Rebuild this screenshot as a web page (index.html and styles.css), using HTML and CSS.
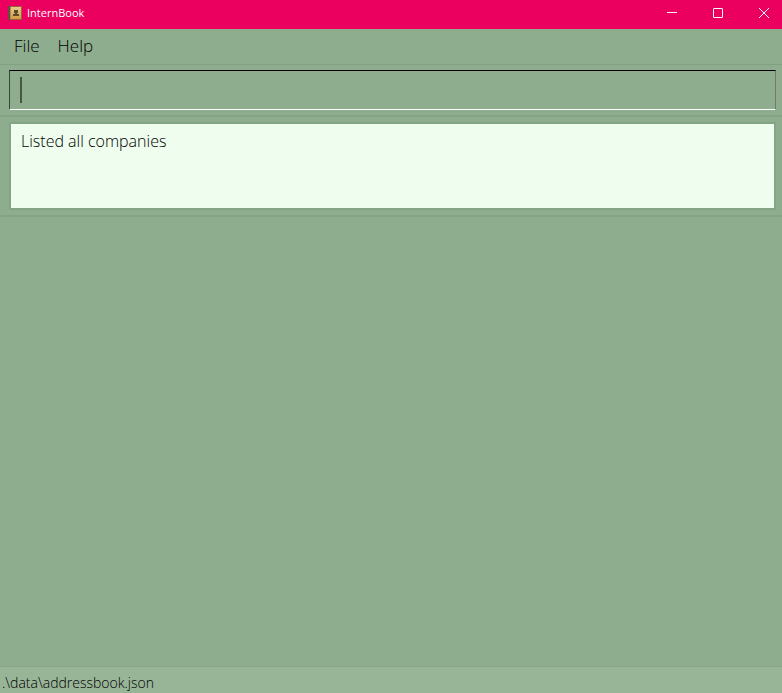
FILE: index.html
```html
<!DOCTYPE html>
<html lang="en">
<head>
<meta charset="utf-8">
<title>InternBook</title>
<link rel="stylesheet" href="styles.css">
</head>
<body>
<header class="titlebar">
  <svg class="app-icon" viewBox="0 0 14 14" aria-hidden="true">
    <defs><linearGradient id="cover" x1="0" y1="0" x2="0" y2="1"><stop offset="0" stop-color="#e8cb90"/><stop offset="1" stop-color="#d39b45"/></linearGradient></defs>
    <rect width="14" height="14" fill="#9b6034"/>
    <rect width="2" height="14" fill="#5f5340"/>
    <rect x="2" y="1" width="1" height="12" fill="#b58a4c"/>
    <rect x="3" y="1" width="10" height="12" fill="url(#cover)"/>
    <path d="M6 4H10V7H9V8H11V10H5V8H7V7H6Z" fill="#5d4a2b"/>
  </svg>
  <h1 class="title">InternBook</h1>
  <div class="window-controls">
    <button class="control" aria-label="Minimize"><svg viewBox="0 0 12 12"><path d="M1 5.500H11"/></svg></button>
    <button class="control" aria-label="Maximize"><svg viewBox="0 0 12 12"><rect x="1.500" y="1.500" width="9" height="9" rx=".5"/></svg></button>
    <button class="control" aria-label="Close"><svg viewBox="0 0 12 12"><path d="M1 1L11 11M11 1L1 11"/></svg></button>
  </div>
</header>
<nav class="menubar">
  <button class="menu">File</button>
  <button class="menu">Help</button>
</nav>
<main class="content">
  <section class="command">
    <input class="command-input" type="text" aria-label="Command">
    <span class="caret"></span>
  </section>
  <section class="result">
    <textarea class="result-text" aria-label="Result" readonly>Listed all companies</textarea>
  </section>
  <section class="companies" aria-label="Companies"></section>
</main>
<footer class="statusbar">.\data\addressbook.json</footer>
</body>
</html>
```
FILE: styles.css
```css
* { box-sizing: border-box; }
body {
  margin: 0;
  min-height: 100vh;
  display: flex;
  flex-direction: column;
  background: #8ead8e;
  color: #000;
  font-family: "Open Sans", "Noto Sans", sans-serif;
  font-weight: 300;
}
button, input, textarea { font: inherit; color: inherit; margin: 0; border-radius: 0; }
.titlebar {
  display: flex;
  align-items: center;
  height: 29px;
  padding: 0 0 3px 8px;
  background: #ec005f;
  color: #fff;
}
.app-icon { flex: none; width: 14px; height: 14px; margin-right: 5px; }
.title { flex: 1; margin: 0; font-size: 11px; font-weight: 400; line-height: 16px; }
.window-controls { display: flex; }
.control {
  display: grid;
  place-items: center;
  width: 46px;
  height: 26px;
  padding: 0 0 0 10px;
  border: 0;
  background: none;
}
.control svg { width: 12px; height: 12px; fill: none; stroke: #fff; stroke-width: 1; }
.menubar {
  display: flex;
  gap: 18px;
  padding: 5px 14px 6px;
  border-bottom: 1px solid #82a182;
}
.menu { padding: 0; border: 0; background: none; font-size: 17px; line-height: 24px; }
.content { flex: 1; display: flex; flex-direction: column; }
.command {
  position: relative;
  padding: 5px 6px 5px 9px;
  border-bottom: 2px solid #84a384;
}
.command-input {
  display: block;
  width: 100%;
  height: 40px;
  padding: 0 10px;
  border: 1px solid;
  border-color: #000 #737873 #fff #384538;
  background: none;
  outline: 0;
  font-size: 17px;
}
.caret { position: absolute; left: 20px; top: 12px; width: 2px; height: 26px; background: #465746; }
.result { padding: 5px 6px 5px 9px; border-bottom: 2px solid #84a384; }
.result-text {
  display: block;
  width: 100%;
  height: 88px;
  padding: 6px 10px;
  border: 2px solid #84a584;
  background: #eefdee;
  outline: 0;
  resize: none;
  font-size: 16px;
  line-height: 22px;
}
.companies { flex: 1; }
.statusbar {
  padding: 6px 2px 0;
  border-top: 1px solid #88a688;
  background: #99b598;
  font-size: 14px;
  line-height: 20px;
}
```
